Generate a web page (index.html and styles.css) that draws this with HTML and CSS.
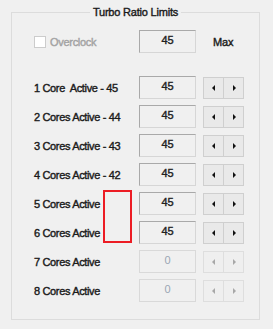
FILE: index.html
```html
<!doctype html>
<html>

<head>

    <link rel="stylesheet" href="styles.css">

</head>

<body>

    <fieldset class="group">
        <legend class="groupTitle">Turbo Ratio Limits</legend>

        <div class="topRow">
            <label class="check"><span class="checkBox"></span>Overclock</label>
            <div class="valueBox">45</div>
            <span class="maxText">Max</span>
        </div>

        <div class="rows">
            <div class="row">
                <span class="label">1 Core&nbsp; Active - 45</span>
                <div class="valueBox">45</div>
                <div class="spin"><span class="arrow left"></span><span class="arrow right"></span></div>
            </div>
            <div class="row">
                <span class="label">2 Cores Active - 44</span>
                <div class="valueBox">45</div>
                <div class="spin"><span class="arrow left"></span><span class="arrow right"></span></div>
            </div>
            <div class="row">
                <span class="label">3 Cores Active - 43</span>
                <div class="valueBox">45</div>
                <div class="spin"><span class="arrow left"></span><span class="arrow right"></span></div>
            </div>
            <div class="row">
                <span class="label">4 Cores Active - 42</span>
                <div class="valueBox">45</div>
                <div class="spin"><span class="arrow left"></span><span class="arrow right"></span></div>
            </div>
            <div class="row">
                <span class="label">5 Cores Active</span>
                <div class="valueBox">45</div>
                <div class="spin"><span class="arrow left"></span><span class="arrow right"></span></div>
            </div>
            <div class="row">
                <span class="label">6 Cores Active</span>
                <div class="valueBox">45</div>
                <div class="spin"><span class="arrow left"></span><span class="arrow right"></span></div>
            </div>
            <div class="row off">
                <span class="label">7 Cores Active</span>
                <div class="valueBox">0</div>
                <div class="spin"><span class="arrow left"></span><span class="arrow right"></span></div>
            </div>
            <div class="row off">
                <span class="label">8 Cores Active</span>
                <div class="valueBox">0</div>
                <div class="spin"><span class="arrow left"></span><span class="arrow right"></span></div>
            </div>
        </div>
    </fieldset>

    <!-- red highlight drawn over the form -->
    <div class="highlight"></div>

</body>

</html>
```

FILE: styles.css
```css
body {
    margin: 0;
    width: 273px;
    height: 329px;
    background: #f0f0f0;
    font-family: "Liberation Sans", Arial, sans-serif;
    font-size: 11px;
    color: #1b1b1b;
    -webkit-text-stroke: 0.4px currentColor;
    position: relative;
    overflow: hidden;
}

.group {
    margin: 6px 0 0 11px;
    width: 249px;
    height: 314px;
    padding: 0;
    border: 1px solid #dcdcdc;
    box-sizing: border-box;
    position: relative;
}

.groupTitle {
    margin: 0 auto;
    padding: 0 3px;
    letter-spacing: -0.2px;
    color: #1a1a1a;
    line-height: 13px;
}

.topRow {
    display: flex;
    align-items: center;
    margin-top: 11px;
    height: 23px;
}

.check {
    display: flex;
    align-items: center;
    width: 127px;
    padding-left: 22px;
    box-sizing: border-box;
    color: #a3a3a3;
    letter-spacing: -0.3px;
}

.checkBox {
    width: 10px;
    height: 10px;
    border: 1px solid #cccccc;
    background: #ffffff;
    margin-right: 4px;
    -webkit-text-stroke: 0;
}

.maxText {
    margin-left: 17px;
    letter-spacing: -0.2px;
}

.rows {
    display: flex;
    flex-direction: column;
    gap: 6px;
    margin-top: 23px;
}

.row {
    display: flex;
    align-items: center;
    height: 23px;
}

.label {
    width: 127px;
    padding-left: 22px;
    box-sizing: border-box;
    letter-spacing: -0.35px;
    white-space: nowrap;
}

.valueBox {
    width: 57px;
    height: 23px;
    box-sizing: border-box;
    border: 1px solid #a9a9a9;
    border-right-color: #d6d6d6;
    border-bottom-color: #d6d6d6;
    background: #f0f0f0;
    text-align: center;
    line-height: 19px;
    color: #222222;
    flex: none;
}

.spin {
    display: flex;
    margin-left: 7px;
    width: 41px;
    height: 22px;
    box-sizing: border-box;
    border: 1px solid #cfcfcf;
    background: #e9e9e9;
}

.spin .arrow {
    flex: 1;
    position: relative;
}

.spin .arrow.left {
    border-right: 1px solid #cfcfcf;
}

.arrow::after {
    content: "";
    position: absolute;
    top: 7px;
    width: 0;
    height: 0;
    border-top: 3px solid transparent;
    border-bottom: 3px solid transparent;
}

.arrow.left::after {
    left: 8px;
    border-right: 3px solid #111111;
}

.arrow.right::after {
    left: 9px;
    border-left: 3px solid #111111;
}

.off .valueBox {
    border-color: #d9d9d9;
    color: #9aa6b4;
    -webkit-text-stroke: 0;
}

.off .spin {
    border-color: #dedede;
    background: #efefef;
}

.off .spin .arrow.left {
    border-right-color: #dedede;
}

.off .arrow.left::after {
    border-right-color: #a8a8a8;
}

.off .arrow.right::after {
    border-left-color: #a8a8a8;
}

.highlight {
    position: absolute;
    left: 103px;
    top: 190px;
    width: 29px;
    height: 53px;
    box-sizing: border-box;
    border: 2px solid #ec1c24;
}
```
